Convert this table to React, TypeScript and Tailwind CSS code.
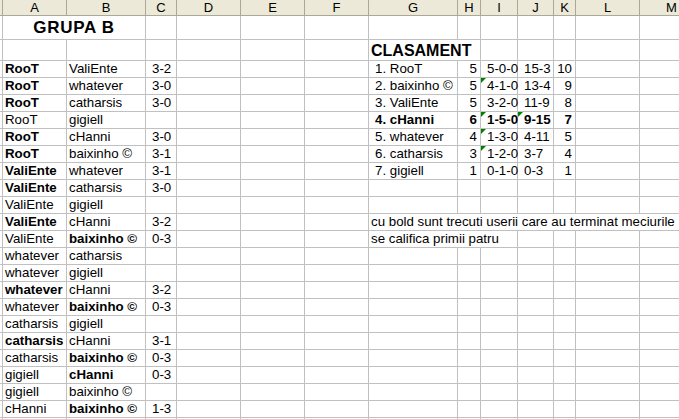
import type { ReactNode } from "react";
import clsx from "clsx";

// column widths include the 1px right grid line
const W = {
  S: "w-[3px]",
  A: "w-[64px]",
  B: "w-[79px]",
  C: "w-[31px]",
  D: "w-[64px]",
  E: "w-[64px]",
  F: "w-[64px]",
  G: "w-[89px]",
  H: "w-[23px]",
  I: "w-[37px]",
  J: "w-[36px]",
  K: "w-[22px]",
  L: "w-[64px]",
  M: "w-[64px]",
};

type Col = keyof typeof W;
const LETTERS: Col[] = ["A", "B", "C", "D", "E", "F", "G", "H", "I", "J", "K", "L", "M"];

function Cell({
  w,
  className,
  tri,
  children,
}: {
  w: string;
  className?: string;
  tri?: boolean;
  children?: ReactNode;
}) {
  return (
    <div
      className={clsx(
        "relative h-full shrink-0 whitespace-nowrap border-r border-b border-[#c0c0c0] leading-[16px]",
        w,
        className,
      )}
    >
      {tri && (
        <span className="absolute left-0 top-0 h-0 w-0 border-t-[5px] border-r-[5px] border-t-[#008000] border-r-transparent" />
      )}
      {children}
    </div>
  );
}

/** Left table: one match per row */
const MATCHES: [string, boolean, string, boolean, string][] = [
  ["RooT", true, "ValiEnte", false, "3-2"],
  ["RooT", true, "whatever", false, "3-0"],
  ["RooT", true, "catharsis", false, "3-0"],
  ["RooT", false, "gigiell", false, ""],
  ["RooT", true, "cHanni", false, "3-0"],
  ["RooT", true, "baixinho ©", false, "3-1"],
  ["ValiEnte", true, "whatever", false, "3-1"],
  ["ValiEnte", true, "catharsis", false, "3-0"],
  ["ValiEnte", false, "gigiell", false, ""],
  ["ValiEnte", true, "cHanni", false, "3-2"],
  ["ValiEnte", false, "baixinho ©", true, "0-3"],
  ["whatever", false, "catharsis", false, ""],
  ["whatever", false, "gigiell", false, ""],
  ["whatever", true, "cHanni", false, "3-2"],
  ["whatever", false, "baixinho ©", true, "0-3"],
  ["catharsis", false, "gigiell", false, ""],
  ["catharsis", true, "cHanni", false, "3-1"],
  ["catharsis", false, "baixinho ©", true, "0-3"],
  ["gigiell", false, "cHanni", true, "0-3"],
  ["gigiell", false, "baixinho ©", false, ""],
  ["cHanni", false, "baixinho ©", true, "1-3"],
];

interface Standing {
  name: string;
  played: string;
  record: string;
  goals: string;
  pts: string;
  bold?: boolean;
  triRecord?: boolean;
  triGoals?: boolean;
}

const TABLE: Standing[] = [
  { name: "1. RooT", played: "5", record: "5-0-0", goals: "15-3", pts: "10" },
  { name: "2. baixinho ©", played: "5", record: "4-1-0", goals: "13-4", pts: "9", triRecord: true },
  { name: "3. ValiEnte", played: "5", record: "3-2-0", goals: "11-9", pts: "8" },
  { name: "4. cHanni", played: "6", record: "1-5-0", goals: "9-15", pts: "7", bold: true, triRecord: true, triGoals: true },
  { name: "5. whatever", played: "4", record: "1-3-0", goals: "4-11", pts: "5", triRecord: true },
  { name: "6. catharsis", played: "3", record: "1-2-0", goals: "3-7", pts: "4", triRecord: true },
  { name: "7. gigiell", played: "1", record: "0-1-0", goals: "0-3", pts: "1" },
];

function rightSide(i: number): ReactNode {
  const s = TABLE[i];
  if (s) {
    const b = s.bold ? "font-bold" : "";
    return (
      <>
        <Cell w={W.G} className={clsx("pl-[6px]", b)}>{s.name}</Cell>
        <Cell w={W.H} className={clsx("pr-[3px] text-right", b)}>{s.played}</Cell>
        <Cell w={W.I} tri={s.triRecord} className={clsx("pl-[6px]", b)}>{s.record}</Cell>
        <Cell w={W.J} tri={s.triGoals} className={clsx("pl-[6px]", b)}>{s.goals}</Cell>
        <Cell w={W.K} className={clsx("pr-[3px] text-right", b)}>{s.pts}</Cell>
        <Cell w={W.L} />
        <Cell w={W.M} />
      </>
    );
  }
  if (i === 9) {
    return (
      <Cell w="w-[335px]" className="pl-[2px]">
        cu bold sunt trecuti userii care au terminat meciurile
      </Cell>
    );
  }
  if (i === 10) {
    return (
      <>
        <Cell w="w-[149px]" className="pl-[2px]">se califica primii patru</Cell>
        <Cell w={W.J} />
        <Cell w={W.K} />
        <Cell w={W.L} />
        <Cell w={W.M} />
      </>
    );
  }
  return (
    <>
      <Cell w={W.G} />
      <Cell w={W.H} />
      <Cell w={W.I} />
      <Cell w={W.J} />
      <Cell w={W.K} />
      <Cell w={W.L} />
      <Cell w={W.M} />
    </>
  );
}

export default function App() {
  const rows = [...MATCHES, null];
  return (
    <div className="h-[419px] w-[679px] overflow-hidden bg-white font-['Liberation_Sans',Arial,sans-serif] text-[13.3px] text-black">
      {/* column headers */}
      <div className="flex h-[16px] bg-[#ece9d8]">
        <div className="h-full w-[3px] shrink-0 border-r border-b border-[#aca899]" />
        {LETTERS.map((l) => (
          <div
            key={l}
            className={clsx(
              "h-full shrink-0 border-r border-b border-[#aca899] text-center text-[13px] leading-[15px]",
              W[l],
            )}
          >
            {l}
          </div>
        ))}
      </div>

      {/* row 1 */}
      <div className="flex h-[24px]">
        <Cell w={W.S} />
        <Cell w="w-[143px]" className="flex items-end justify-center pb-[1px] text-[17px] font-bold leading-[20px] tracking-[0.7px]">
          GRUPA B
        </Cell>
        {(["C", "D", "E", "F", "G", "H", "I", "J", "K", "L", "M"] as Col[]).map((c) => (
          <Cell key={c} w={W[c]} />
        ))}
      </div>

      {/* row 2 */}
      <div className="flex h-[21px]">
        {(["S", "A", "B", "C", "D", "E", "F"] as Col[]).map((c) => (
          <Cell key={c} w={W[c]} />
        ))}
        <Cell w="w-[112px]" className="flex items-end pl-[2px] text-[16px] font-bold leading-[19px]">
          CLASAMENT
        </Cell>
        {(["I", "J", "K", "L", "M"] as Col[]).map((c) => (
          <Cell key={c} w={W[c]} />
        ))}
      </div>

      {rows.map((m, i) => (
        <div key={i} className="flex h-[17px]">
          <Cell w={W.S} />
          <Cell w={W.A} className={clsx("pl-[2px]", m?.[1] && "font-bold")}>{m?.[0]}</Cell>
          <Cell w={W.B} className={clsx("pl-[2px]", m?.[3] && "font-bold")}>{m?.[2]}</Cell>
          <Cell w={W.C} className="pl-[6px]">{m?.[4]}</Cell>
          <Cell w={W.D} />
          <Cell w={W.E} />
          <Cell w={W.F} />
          {rightSide(i)}
        </div>
      ))}
    </div>
  );
}
